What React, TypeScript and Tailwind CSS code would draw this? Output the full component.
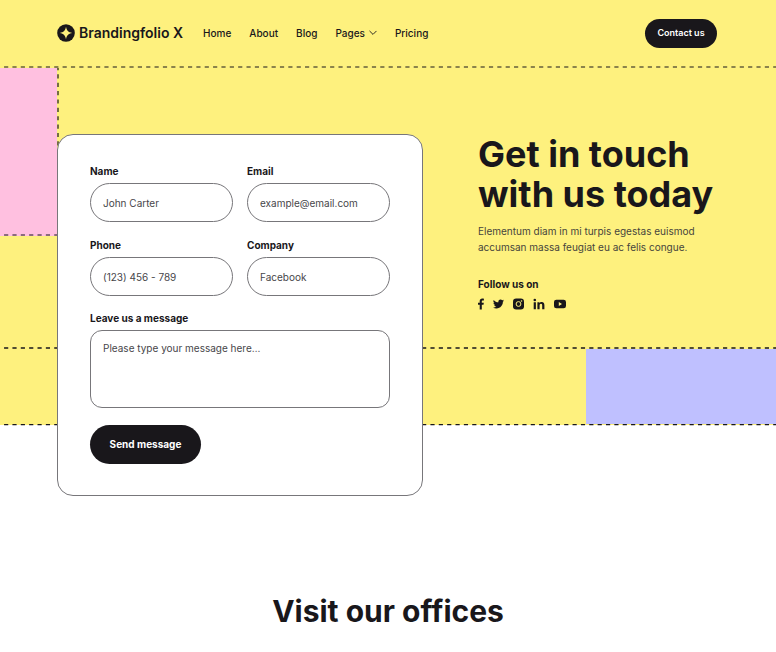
import type { ReactNode } from "react";

function DashH({ className = "", y = "1", w = "1.2" }: { className?: string; y?: string; w?: string }) {
  return (
    <svg className={`block h-0.5 w-full shrink-0 ${className}`} aria-hidden="true">
      <line x1="0" y1={y} x2="100%" y2={y} stroke="#19171b" strokeWidth={w} strokeDasharray="4.18 4.18" strokeDashoffset="4.3" />
    </svg>
  );
}

function DashV() {
  return (
    <svg className="block h-full w-0.5 shrink-0" aria-hidden="true">
      <line x1="1" y1="0" x2="1" y2="100%" stroke="#19171b" strokeWidth="1.2" strokeDasharray="4.18 4.18" strokeDashoffset="2" />
    </svg>
  );
}

function Logo() {
  return (
    <svg viewBox="0 0 18 18" className="size-[18px]" aria-hidden="true">
      <circle cx="9" cy="9" r="8.8" fill="#19171b" />
      <path d="M9 2.8C9.8 6.8 11.2 8.2 15.2 9C11.2 9.8 9.8 11.2 9 15.2C8.2 11.2 6.8 9.8 2.8 9C6.8 8.2 8.2 6.8 9 2.8Z" fill="#fef17e" />
    </svg>
  );
}

function Field({ id, label, placeholder, type = "text" }: { id: string; label: string; placeholder: string; type?: string }) {
  return (
    <div className="flex min-w-0 flex-col gap-1">
      <label htmlFor={id} className="text-[10px] leading-4 font-bold">{label}</label>
      <input
        id={id}
        type={type}
        placeholder={placeholder}
        className="h-[39px] w-full rounded-full border border-[#77767a] bg-white px-3 text-[10px] outline-none placeholder:text-[#47464a] placeholder:opacity-100"
      />
    </div>
  );
}

function Social({ label, box, size, children }: { label: string; box: string; size: string; children: ReactNode }) {
  return (
    <a href="#" aria-label={label}>
      <svg viewBox={box} className={size} fill="#19171b" aria-hidden="true">{children}</svg>
    </a>
  );
}

function Header() {
  return (
    <header className="flex h-[66px] items-center justify-between pr-[59px] pl-[57px]">
      <div className="flex items-center">
        <a href="#" className="flex items-center gap-1 text-sm font-semibold">
          <Logo />
          Brandingfolio X
        </a>
        <nav className="ml-5 flex items-center gap-[18px] text-[10px] leading-4 font-medium">
          <a href="#">Home</a>
          <a href="#">About</a>
          <a href="#">Blog</a>
          <a href="#" className="flex items-center gap-1">
            Pages
            <svg viewBox="0 0 8 6" className="h-1.5 w-2" fill="none" stroke="#19171b" strokeWidth="0.9" strokeLinecap="round" strokeLinejoin="round" aria-hidden="true">
              <path d="M0.8 1.2L4 4.4L7.2 1.2" />
            </svg>
          </a>
          <a href="#">Pricing</a>
        </nav>
      </div>
      <button type="button" className="h-[29px] w-[72px] rounded-full bg-[#19171b] text-[9px] font-semibold text-white">Contact us</button>
    </header>
  );
}

function Backdrop() {
  return (
    <div className="flex flex-col self-start [grid-area:1/1]">
      <div className="bg-[#fef17e]">
        <DashH />
        <div className="flex h-[166px]">
          <div className="w-[57px] bg-[#ffc0e0]" />
          <DashV />
        </div>
        <div className="w-[58px] bg-[#ffc0e0]"><DashH /></div>
        <div className="h-[111px]" />
        <DashH w="1.4" />
        <div className="flex h-[75px] justify-end">
          <div className="w-[190px] bg-[#bfc0ff]" />
        </div>
      </div>
      <DashH y="0.6" className="bg-linear-to-b from-[#fef17e] from-50% to-white to-50%" />
    </div>
  );
}

function ContactForm() {
  return (
    <form className="flex w-[366px] shrink-0 flex-col rounded-2xl border border-[#77767a] bg-white px-8 pt-7 pb-[31px]" onSubmit={(e) => e.preventDefault()}>
      <div className="grid grid-cols-2 gap-x-[14px] gap-y-[15px]">
        <Field id="name" label="Name" placeholder="John Carter" />
        <Field id="email" label="Email" placeholder="example@email.com" type="email" />
        <Field id="phone" label="Phone" placeholder="(123) 456 - 789" type="tel" />
        <Field id="company" label="Company" placeholder="Facebook" />
      </div>
      <label htmlFor="message" className="mt-[14px] text-[10px] leading-4 font-bold">Leave us a message</label>
      <textarea
        id="message"
        placeholder="Please type your message here…"
        className="mt-1 h-[78px] w-full resize-none rounded-xl border border-[#77767a] bg-white px-3 py-[9px] text-[10px] leading-4 outline-none placeholder:text-[#47464a] placeholder:opacity-100"
      />
      <button type="submit" className="mt-[17px] h-[39px] w-[111px] rounded-full bg-[#19171b] text-[10px] font-bold text-white">Send message</button>
    </form>
  );
}

function Intro() {
  return (
    <div className="min-w-0">
      <h1 className="text-[36px] leading-10 font-bold">Get in touch<br />with us today</h1>
      <p className="mt-[9px] text-[10px] leading-4 text-[#47453c]">Elementum diam in mi turpis egestas euismod<br />accumsan massa feugiat eu ac felis congue.</p>
      <h2 className="mt-[21px] text-[10px] leading-4 font-bold">Follow us on</h2>
      <div className="mt-1.5 flex items-center gap-[9px]">
        <Social label="Facebook" box="0 0 6 12" size="h-3 w-1.5">
          <path d="M1.7 11.5V6.8H0V4.8H1.7V3.3C1.7 1.5 2.7 0.6 4.3 0.6C5 0.6 5.6 0.7 5.9 0.7V2.5H4.9C4.1 2.5 3.8 2.9 3.8 3.5V4.8H5.8L5.5 6.8H3.8V11.5Z" />
        </Social>
        <Social label="Twitter" box="0 2 24 20" size="h-[10px] w-[11px]">
          <path d="M23.95 4.57a10 10 0 01-2.82.77 4.96 4.96 0 002.16-2.72c-.95.55-2 .95-3.13 1.18a4.92 4.92 0 00-8.38 4.48C7.69 8.1 4.07 6.13 1.64 3.16a4.92 4.92 0 001.52 6.57 4.9 4.9 0 01-2.23-.61v.06a4.92 4.92 0 003.95 4.83 5 5 0 01-2.21.08 4.94 4.94 0 004.6 3.42A9.87 9.87 0 010 19.54a13.99 13.99 0 007.55 2.21c9.05 0 14-7.5 14-13.98 0-.21 0-.42-.02-.63a9.94 9.94 0 002.42-2.57z" />
        </Social>
        <Social label="Instagram" box="0.5 0 11 12" size="h-3 w-[11px]">
          <rect x="0.5" y="0.5" width="11" height="11" rx="3.2" />
          <circle cx="6" cy="6" r="2.4" fill="none" stroke="#fef17e" strokeWidth="1" />
          <circle cx="9" cy="3" r="0.8" fill="#fef17e" />
        </Social>
        <Social label="LinkedIn" box="0 0 12 12" size="h-3 w-3">
          <path d="M0.7 4.2H2.9V11.2H0.7ZM4.4 4.2H6.5V5.2C6.9 4.5 7.6 4 8.7 4C10.8 4 11.4 5.3 11.4 7.3V11.2H9.2V7.7C9.2 6.7 9.1 5.8 8 5.8C6.9 5.8 6.6 6.7 6.6 7.7V11.2H4.4Z" />
          <circle cx="1.8" cy="2" r="1.3" />
        </Social>
        <Social label="YouTube" box="0 0 12 10" size="h-[10px] w-3">
          <rect x="0" y="0.7" width="12" height="8.6" rx="2.4" />
          <path d="M4.8 3.1V6.9L8 5Z" fill="#fef17e" />
        </Social>
      </div>
    </div>
  );
}

export default function App() {
  return (
    <div className="min-h-screen bg-white font-['Inter',sans-serif] text-[#19171b]">
      <div className="bg-[#fef17e]"><Header /></div>
      <main>
        <section className="grid">
          <Backdrop />
          <div className="z-10 flex items-start gap-[55px] pt-[68px] pr-8 pl-[57px] [grid-area:1/1]">
            <ContactForm />
            <Intro />
          </div>
        </section>
        <h2 className="mt-[95px] pb-5 text-center text-[30px] leading-10 font-bold">Visit our offices</h2>
      </main>
    </div>
  );
}
